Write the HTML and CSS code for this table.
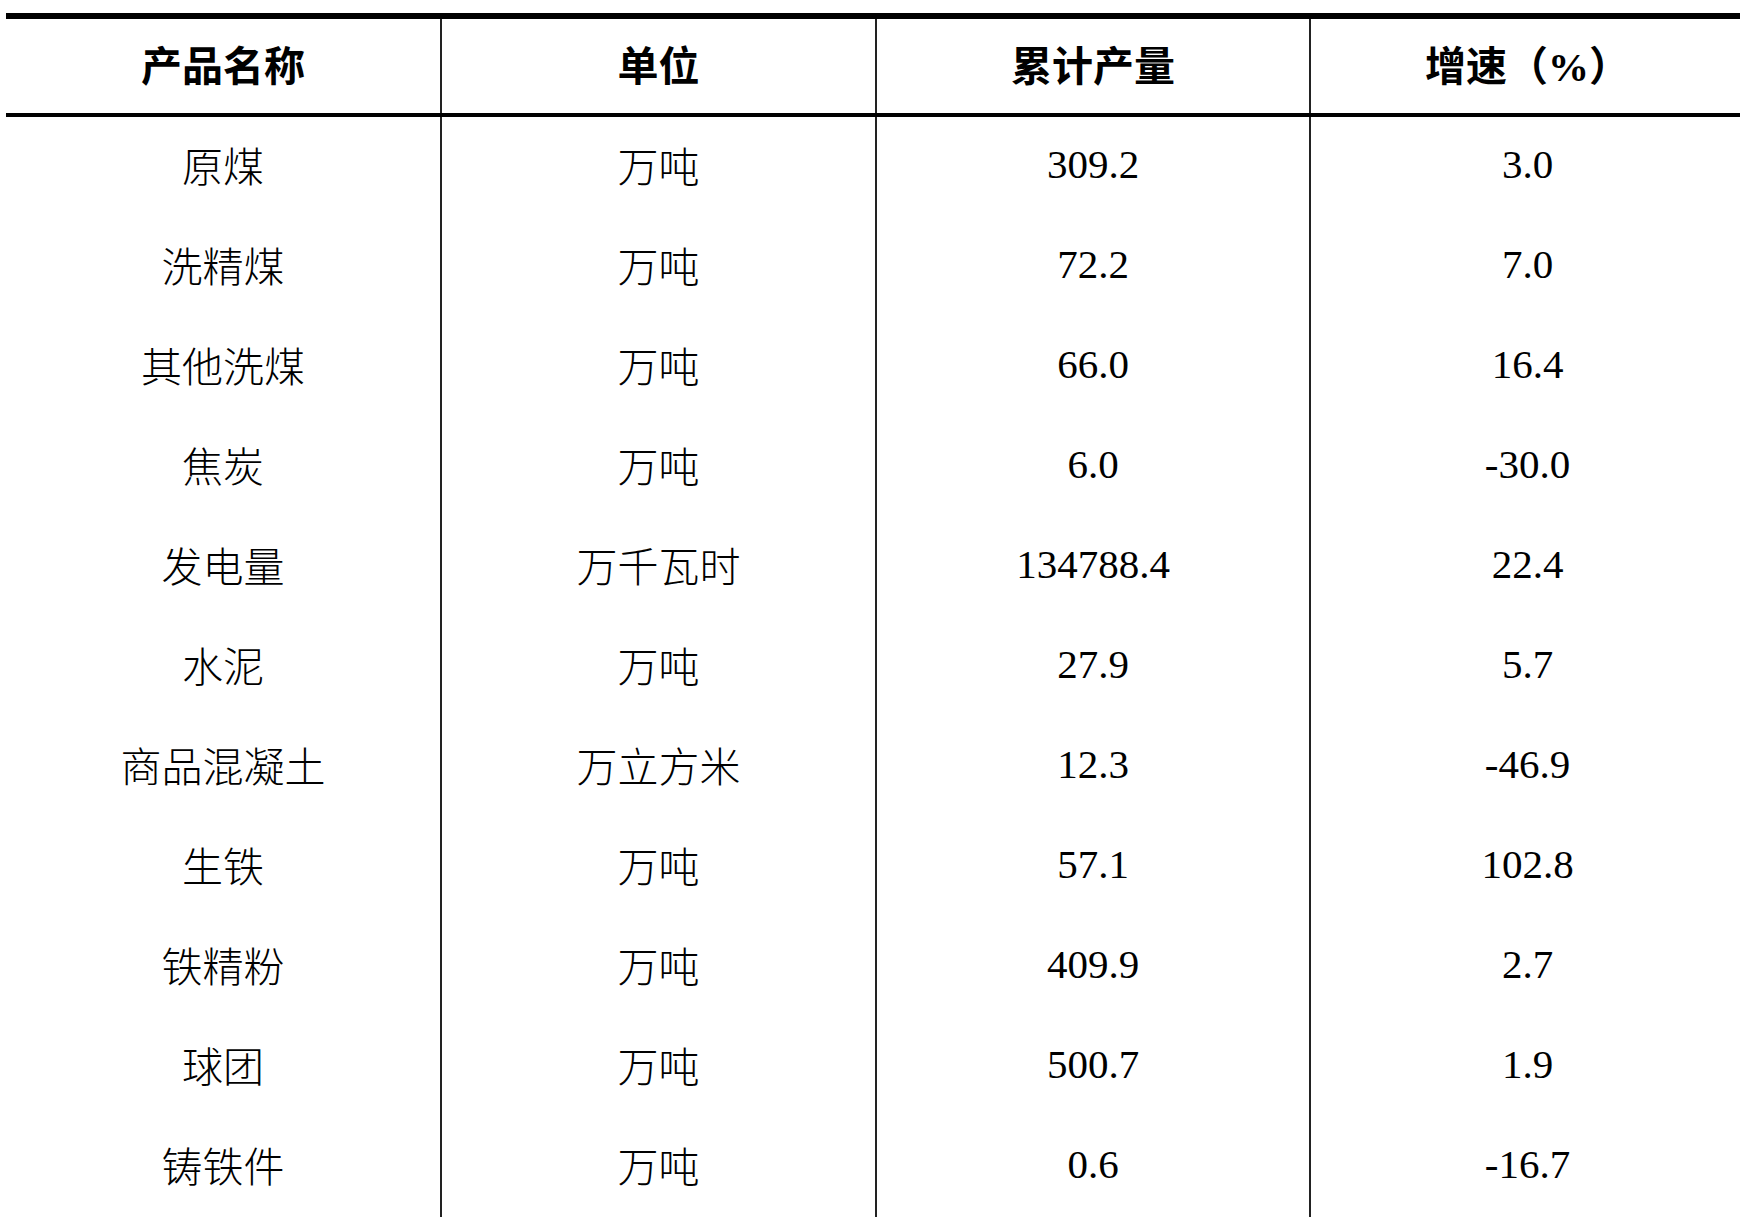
FILE: index.html
```html
<!DOCTYPE html>
<html lang="zh-CN">
<head>
<meta charset="utf-8">
<title>主要工业产品产量</title>
<link rel="stylesheet" href="styles.css">
</head>
<body>
<div class="sheet">
  <div class="row head">
    <div class="cell">产品名称</div>
    <div class="cell">单位</div>
    <div class="cell">累计产量</div>
    <div class="cell">增速（%）</div>
  </div>
  <div class="row"><div class="cell">原煤</div><div class="cell">万吨</div><div class="cell">309.2</div><div class="cell">3.0</div></div>
  <div class="row"><div class="cell">洗精煤</div><div class="cell">万吨</div><div class="cell">72.2</div><div class="cell">7.0</div></div>
  <div class="row"><div class="cell">其他洗煤</div><div class="cell">万吨</div><div class="cell">66.0</div><div class="cell">16.4</div></div>
  <div class="row"><div class="cell">焦炭</div><div class="cell">万吨</div><div class="cell">6.0</div><div class="cell">-30.0</div></div>
  <div class="row"><div class="cell">发电量</div><div class="cell">万千瓦时</div><div class="cell">134788.4</div><div class="cell">22.4</div></div>
  <div class="row"><div class="cell">水泥</div><div class="cell">万吨</div><div class="cell">27.9</div><div class="cell">5.7</div></div>
  <div class="row"><div class="cell">商品混凝土</div><div class="cell">万立方米</div><div class="cell">12.3</div><div class="cell">-46.9</div></div>
  <div class="row"><div class="cell">生铁</div><div class="cell">万吨</div><div class="cell">57.1</div><div class="cell">102.8</div></div>
  <div class="row"><div class="cell">铁精粉</div><div class="cell">万吨</div><div class="cell">409.9</div><div class="cell">2.7</div></div>
  <div class="row"><div class="cell">球团</div><div class="cell">万吨</div><div class="cell">500.7</div><div class="cell">1.9</div></div>
  <div class="row"><div class="cell">铸铁件</div><div class="cell">万吨</div><div class="cell">0.6</div><div class="cell">-16.7</div></div>
</div>
</body>
</html>
```
FILE: styles.css
```css
html, body {
  margin: 0;
  padding: 0;
  background: #fff;
  overflow: hidden;
}
body {
  font-family: "Liberation Serif", "Noto Sans CJK SC", serif;
  font-size: 41px;
  color: #000;
}
.sheet {
  margin: 13px 0 0 6px;
  width: 1738px;
  border-top: 6px solid #000;
}
.row {
  display: grid;
  grid-template-columns: 434px 435px 434px 435px;
  height: 100px;
}
.row.head {
  height: 94px;
  border-bottom: 4px solid #000;
}
.cell {
  display: flex;
  align-items: center;
  justify-content: center;
  border-left: 2px solid #222;
  white-space: nowrap;
  font-weight: 300;
  padding-bottom: 6px;
  box-sizing: border-box;
}
.head .cell {
  font-weight: 700;
}
.cell:first-child {
  border-left: none;
}
```
